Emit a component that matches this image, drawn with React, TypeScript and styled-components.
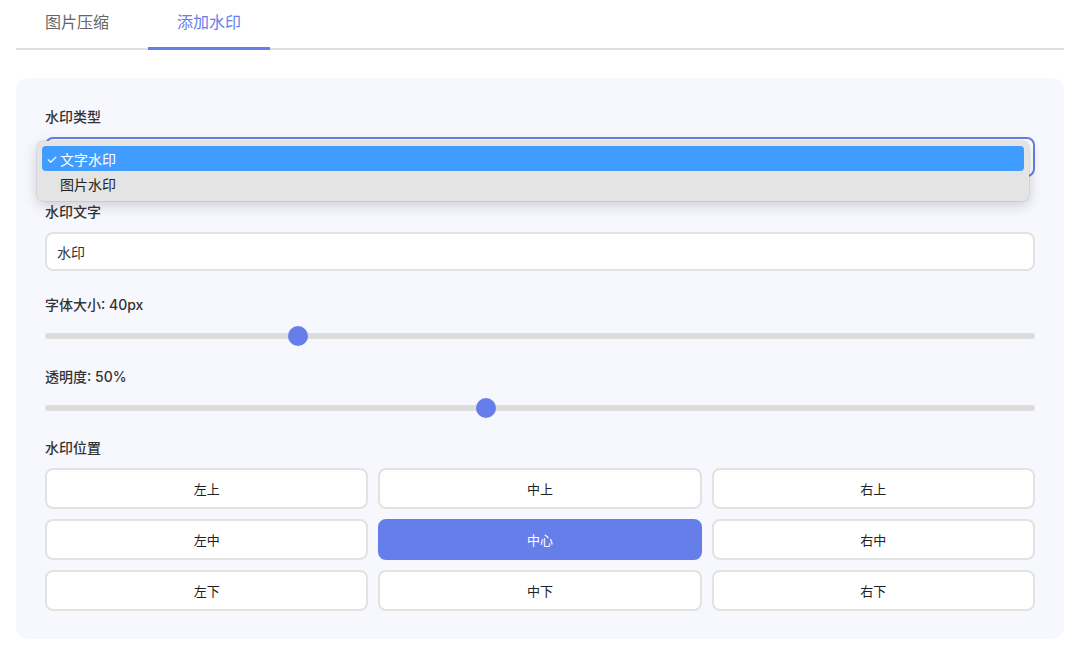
import React from "react";
import styled, { createGlobalStyle, css } from "styled-components";

const GlobalStyle = createGlobalStyle`
  * { box-sizing: border-box; }
  html, body { margin: 0; padding: 0; background: #ffffff; }
  body {
    font-family: Inter, "Noto Sans CJK SC", "Noto Sans", sans-serif;
    color: #333;
    -webkit-font-smoothing: antialiased;
  }
`;

const Page = styled.div`
  width: 1080px;
  height: 652px;
  padding: 0 16px;
  overflow: hidden;
`;

const TabBar = styled.div`
  display: flex;
  gap: 10px;
  height: 50px;
  border-bottom: 2px solid #e0e0e0;
`;

const Tab = styled.div<{ $active?: boolean }>`
  height: 50px;
  margin-bottom: -2px;
  padding: 0 29px 3px;
  display: flex;
  align-items: center;
  font-size: 16px;
  line-height: 24px;
  color: ${(p) => (p.$active ? "#667eea" : "#666")};
  border-bottom: 3px solid ${(p) => (p.$active ? "#667eea" : "transparent")};
`;

const Panel = styled.div`
  margin-top: 28px;
  background: #f7f8fd;
  border-radius: 12px;
  padding: 29px 29px 28px;
`;

const Field = styled.div<{ $mb?: number }>`
  position: relative;
  margin-bottom: ${(p) => (p.$mb ?? 20)}px;
`;

const Label = styled.div<{ $mb?: number }>`
  font-size: 14px;
  line-height: 20px;
  font-weight: 500;
  color: #333;
  margin-bottom: ${(p) => (p.$mb ?? 10)}px;
`;

const boxBase = css`
  height: 40px;
  border-radius: 8px;
  background: #fff;
  font-size: 14px;
  display: flex;
  align-items: center;
  padding: 0 10px;
  color: #333;
`;

const SelectBox = styled.div`
  ${boxBase};
  border: 2px solid #667eea;
  justify-content: flex-end;
`;

const SelectArrow = styled.svg`
  width: 7px;
  height: 10px;
  margin-right: -6px;
`;

const Menu = styled.div`
  position: absolute;
  left: -8px;
  right: 6px;
  top: 34px;
  background: #e4e4e4;
  border-radius: 6px;
  padding: 5px;
  box-shadow: 0 4px 14px rgba(0, 0, 0, 0.18), 0 0 0 0.5px rgba(0, 0, 0, 0.12);
  z-index: 5;
`;

const MenuItem = styled.div<{ $selected?: boolean }>`
  height: 25px;
  display: flex;
  align-items: center;
  border-radius: 4px;
  padding-left: 4px;
  font-size: 14px;
  color: ${(p) => (p.$selected ? "#fff" : "#222")};
  background: ${(p) => (p.$selected ? "#419cff" : "transparent")};
`;

const Check = styled.span`
  width: 14px;
  display: inline-block;
  font-size: 13px;
`;

const TextInput = styled.div`
  ${boxBase};
  height: 39px;
  border: 2px solid #e2e2e2;
`;

const SliderWrap = styled.div`
  position: relative;
  height: 22px;
`;

const Track = styled.div`
  position: absolute;
  left: 0;
  right: 0;
  top: 8px;
  height: 6px;
  border-radius: 3px;
  background: #dddddd;
`;

const Thumb = styled.div`
  position: absolute;
  top: 1px;
  width: 20px;
  height: 20px;
  border-radius: 50%;
  background: #667eea;
`;

const Grid = styled.div`
  display: grid;
  grid-template-columns: repeat(3, 1fr);
  gap: 10px;
`;

const PosButton = styled.div<{ $active?: boolean }>`
  height: 41px;
  border-radius: 8px;
  border: 2px solid ${(p) => (p.$active ? "#667eea" : "#e2e2e2")};
  background: ${(p) => (p.$active ? "#667eea" : "#fff")};
  color: ${(p) => (p.$active ? "#fff" : "#222")};
  font-size: 13px;
  display: flex;
  align-items: center;
  justify-content: center;
`;

const Slider = ({ frac }: { frac: number }) => (
  <SliderWrap>
    <Track />
    <Thumb style={{ left: `calc(${frac} * (100% - 20px))` }} />
  </SliderWrap>
);

const positions = ["左上", "中上", "右上", "左中", "中心", "右中", "左下", "中下", "右下"];

export default function App() {
  return (
    <Page>
      <GlobalStyle />
      <TabBar>
        <Tab>图片压缩</Tab>
        <Tab $active>添加水印</Tab>
      </TabBar>
      <Panel>
        <Field $mb={25}>
          <Label>水印类型</Label>
          <SelectBox>
            <SelectArrow viewBox="0 0 7 10">
              <path d="M1 4 L3.5 1.5 L6 4 M1 6 L3.5 8.5 L6 6" fill="none" stroke="#333" strokeWidth="1.2" />
            </SelectArrow>
          </SelectBox>
          <Menu>
            <MenuItem $selected>
              <Check>✓</Check>文字水印
            </MenuItem>
            <MenuItem>
              <Check />图片水印
            </MenuItem>
          </Menu>
        </Field>
        <Field $mb={24}>
          <Label>水印文字</Label>
          <TextInput>水印</TextInput>
        </Field>
        <Field $mb={20}>
          <Label>字体大小: 40px</Label>
          <Slider frac={0.25} />
        </Field>
        <Field $mb={19}>
          <Label>透明度: 50%</Label>
          <Slider frac={0.4444} />
        </Field>
        <Field $mb={0}>
          <Label $mb={10}>水印位置</Label>
          <Grid>
            {positions.map((p) => (
              <PosButton key={p} $active={p === "中心"}>
                {p}
              </PosButton>
            ))}
          </Grid>
        </Field>
      </Panel>
    </Page>
  );
}
